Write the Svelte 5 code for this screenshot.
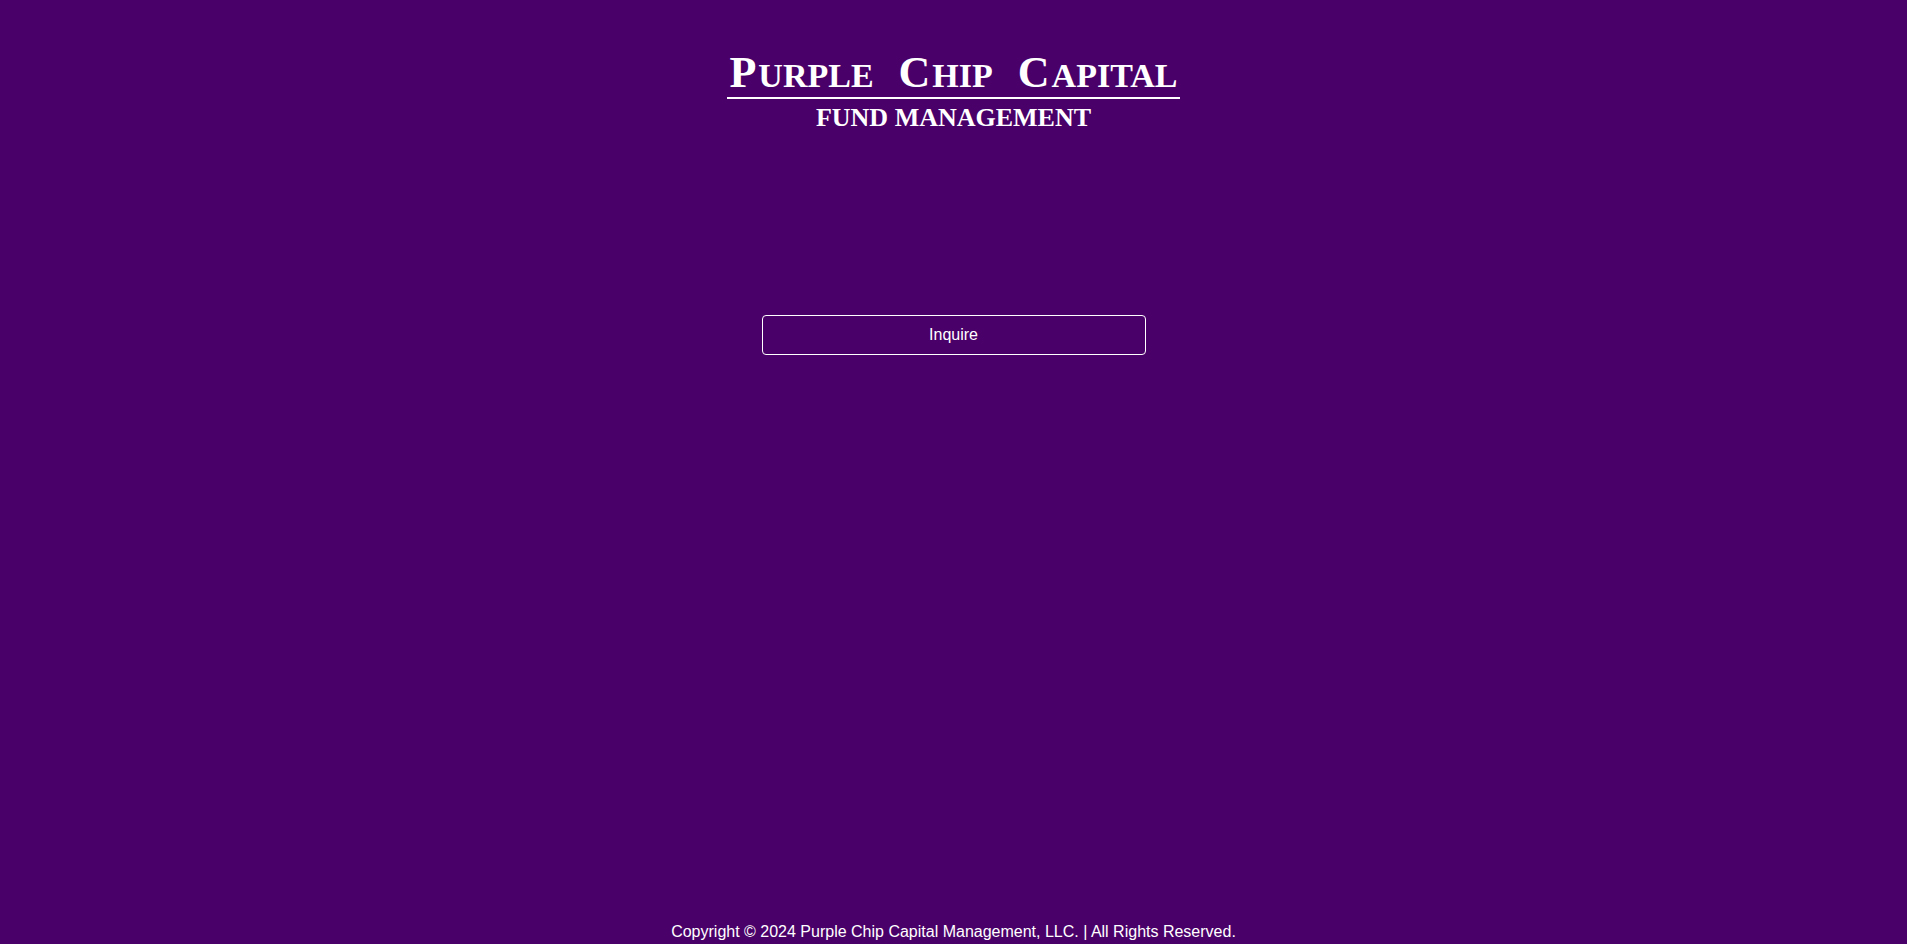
<main class="page">
  <header class="brand">
    <h1>
      {#each ['Purple', 'Chip', 'Capital'] as word}
        <span class="word">{word[0]}<span class="rest">{word.slice(1)}</span></span>
      {/each}
    </h1>
    <p>FUND MANAGEMENT</p>
  </header>
  <button class="inquire" type="button">Inquire</button>
  <footer>Copyright © 2024 Purple Chip Capital Management, LLC. | All Rights Reserved.</footer>
</main>

<style>
  :global(body) {
    margin: 0;
    background: #4a0069;
  }
  .page {
    box-sizing: border-box;
    min-height: 100vh;
    display: flex;
    flex-direction: column;
    align-items: center;
    padding-top: 49px;
    color: #fff;
    font: 16px/24px "Liberation Sans", Arial, sans-serif;
  }
  .brand {
    display: flex;
    flex-direction: column;
    align-items: center;
    font-family: "Liberation Serif", "Times New Roman", serif;
    font-weight: 700;
  }
  h1 {
    display: flex;
    gap: 25px;
    margin: 0;
    padding: 0 2px;
    border-bottom: 2px solid #fff;
    font-size: 44px;
    line-height: 48px;
    white-space: nowrap;
  }
  .rest {
    margin-left: 2px;
    font-size: 34px;
    line-height: 1;
    text-transform: uppercase;
  }
  .brand p {
    margin: 3px 0 0;
    font-size: 26px;
    line-height: 32px;
  }
  .inquire {
    box-sizing: border-box;
    width: 384px;
    max-width: 100%;
    height: 40px;
    margin-top: 181px;
    border: 1px solid #fff;
    border-radius: 4px;
    background: transparent;
    color: inherit;
    font: inherit;
    cursor: pointer;
  }
  footer {
    margin-top: auto;
    text-align: center;
  }
</style>
